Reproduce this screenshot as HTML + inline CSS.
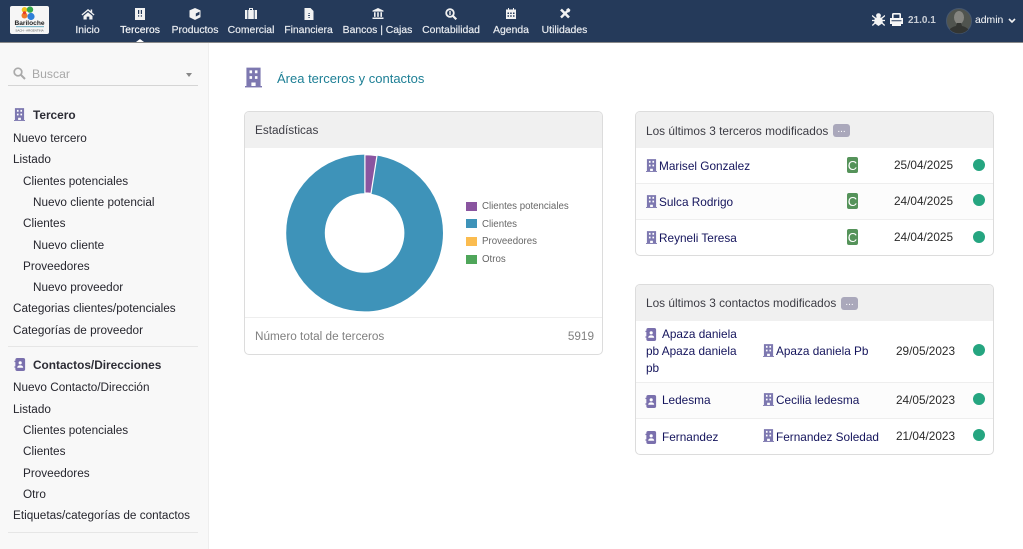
<!DOCTYPE html>
<html lang="es"><head><meta charset="utf-8"><title>Área terceros y contactos</title>
<style>
html,body{margin:0;padding:0;background:#fff;width:1023px;height:549px;overflow:hidden;font-family:"Liberation Sans",Arial,sans-serif;}
.a{position:absolute;white-space:nowrap;line-height:14px;}
#top{position:absolute;left:0;top:0;width:1023px;height:42px;background:#253a5a;border-bottom:1px solid #8a8a8a;box-sizing:content-box;}
.n{position:absolute;top:24px;font-size:10.4px;line-height:14px;color:#e8ebf0;white-space:nowrap;transform:translateX(-50%);-webkit-text-stroke:.2px #e8ebf0;}
.ni{position:absolute;top:8px;transform:translateX(-50%);}
#side{position:absolute;left:0;top:43px;width:208px;height:506px;background:#f8f8f8;border-right:1px solid #eee;}
.s{position:absolute;font-size:11.75px;line-height:14px;color:#26262e;white-space:nowrap;margin-top:1px;}
.sb{font-weight:bold;color:#2c2c35;font-size:11.85px;margin-top:0;}
.hr{position:absolute;height:1px;background:#e6e6e6;left:8px;width:190px;}
.card{position:absolute;border:1px solid #dcdcdc;border-radius:5px;box-sizing:border-box;background:#fff;overflow:hidden;}
.ch{position:absolute;left:0;top:0;right:0;height:36px;background:#f0f0f0;}
.t{position:absolute;font-size:11.8px;line-height:14px;white-space:nowrap;color:#14145c;}
.d{color:#2a2a2a;}
.dot{position:absolute;width:12px;height:12px;border-radius:50%;background:#25a580;}
.c{position:absolute;width:11px;height:16px;background:#55935a;border-radius:2px;color:#fff;font-size:13px;line-height:17px;text-align:center;}
.badge{display:inline-block;position:absolute;width:17px;height:13px;background:#aaa8bb;border-radius:3px;color:#fff;font-size:10px;line-height:12px;text-align:center;}
.row{position:absolute;left:0;right:0;height:1px;background:#eee;}
.lg{position:absolute;font-size:9.7px;line-height:12px;color:#666;white-space:nowrap;}
.sw{position:absolute;width:11px;height:9px;}
svg{display:block;}
</style></head><body>
<svg width="0" height="0" style="position:absolute"><defs>
<symbol id="b" viewBox="0 0 12 14"><path fill="#7d78b0" d="M1 0h10v13H7.5v-2.5h-3V13H1z"/><rect x="0" y="13" width="12" height="1" fill="#7d78b0"/><path fill="#fff" d="M3.2 2h1.8v2H3.2zM7 2h1.8v2H7zM3.2 6h1.8v2H3.2zM7 6h1.8v2H7z"/></symbol>
<symbol id="p" viewBox="0 0 12 14"><rect x="1" y="0" width="10.5" height="14" rx="2" fill="#7a70ad"/><circle cx="6.2" cy="5.2" r="1.7" fill="#fff"/><path fill="#fff" d="M3 10.5c0-2 1.5-2.6 3.2-2.6s3.2.6 3.2 2.6z"/><rect x="0" y="3" width="2" height="1.4" fill="#7a70ad"/><rect x="0" y="9" width="2" height="1.4" fill="#7a70ad"/></symbol>
</defs></svg>

<div id="top">
 <svg style="position:absolute;left:10px;top:6px" width="39" height="28" viewBox="0 0 39 28"><rect width="39" height="28" rx="2" fill="#f6f6f6"/><circle cx="14.5" cy="3.8" r="2.8" fill="#f2c21d"/><circle cx="20" cy="3.6" r="3.2" fill="#35a84a"/><circle cx="14.5" cy="9.5" r="3" fill="#ee7b2c"/><circle cx="21" cy="10.5" r="3.6" fill="#2f7fd8"/><circle cx="14.5" cy="6.8" r="1.6" fill="#e53c2e"/><text x="19.5" y="19" font-family="Liberation Sans" font-size="6.6" font-weight="bold" text-anchor="middle" fill="#222">Bariloche</text><rect x="6" y="20" width="28" height="1.2" fill="#7fb7c9"/><text x="19.5" y="25.5" font-family="Liberation Sans" font-size="3" text-anchor="middle" fill="#555">SACH - ARGENTINA</text></svg>

 <svg class="ni" style="left:87.5px" width="13" height="12" viewBox="0 0 13 12"><path fill="#f2f2f2" d="M6.5 1 0 6.5l.8 1L6.5 2.8l5.7 4.7.8-1-2.3-1.9V1.5H9.2v1.6z"/><path fill="#f2f2f2" d="M2 8 6.5 4.2 11 8v3.5H7.8V8.6H5.2v2.9H2z"/></svg>
 <div class="n" style="left:87.5px">Inicio</div>

 <svg class="ni" style="left:140px" width="10" height="12" viewBox="0 0 10 12"><rect width="10" height="12" fill="#f2f2f2"/><path fill="#253a5a" d="M3 2h1.2v4H3zM5.8 2H7v4H5.8zM3 7.2h1.2v1.4H3zM5.8 7.2H7v1.4H5.8z"/></svg>
 <div class="n" style="left:140px;color:#fff">Terceros</div>
 <div style="position:absolute;left:136px;top:39px;width:0;height:0;border-left:4px solid transparent;border-right:4px solid transparent;border-bottom:3px solid #fff"></div>

 <svg class="ni" style="left:195px" width="11" height="12" viewBox="0 0 11 12"><path fill="#f2f2f2" d="M5.5 0 11 2.4v6.8L5.5 12 0 9.2V2.4z"/><path fill="#253a5a" d="M6.3 5.5 10 3.6v3L6.3 8.5z"/></svg>
 <div class="n" style="left:195px">Productos</div>

 <svg class="ni" style="left:251px" width="12" height="11" viewBox="0 0 12 11"><path fill="#f2f2f2" d="M4 0h4v2h4v9H0V2h4zM5 1v1h2V1z"/><path fill="#253a5a" d="M2.4 2h.8v9h-.8zM8.8 2h.8v9h-.8z"/></svg>
 <div class="n" style="left:251px">Comercial</div>

 <svg class="ni" style="left:308.5px" width="9" height="12" viewBox="0 0 9 12"><path fill="#f2f2f2" d="M0 0h6l3 3v9H0z"/><path fill="#253a5a" d="M4 5h1.2v1H4zM3.6 7h1.8v1H3.6zM4 9h1.2v1H4z"/></svg>
 <div class="n" style="left:308.5px">Financiera</div>

 <svg class="ni" style="left:377.5px" width="11" height="11" viewBox="0 0 11 11"><path fill="#f2f2f2" d="M5.5 0 11 2.6v1H0v-1zM0 9.5h11V11H0z"/><path fill="#f2f2f2" d="M1.5 4.2h1.6v4.7H1.5zM4.7 4.2h1.6v4.7H4.7zM7.9 4.2h1.6v4.7H7.9z"/></svg>
 <div class="n" style="left:377.5px">Bancos | Cajas</div>

 <svg class="ni" style="left:451px" width="12" height="12" viewBox="0 0 12 12"><circle cx="5" cy="5" r="3.8" fill="none" stroke="#f2f2f2" stroke-width="1.8"/><path stroke="#f2f2f2" stroke-width="2.2" d="M8 8l3.3 3.3"/><rect x="4.3" y="3" width="1.4" height="4" fill="#f2f2f2"/></svg>
 <div class="n" style="left:451px">Contabilidad</div>

 <svg class="ni" style="left:511px" width="10" height="11" viewBox="0 0 10 11"><path fill="#f2f2f2" d="M0 1.5h2V0h1v1.5h4V0h1v1.5h2V11H0z"/><path fill="#253a5a" d="M1.5 4.5h1.5V6H1.5zM4.2 4.5h1.5V6H4.2zM7 4.5h1.5V6H7zM1.5 7.3h1.5v1.5H1.5zM4.2 7.3h1.5v1.5H4.2zM7 7.3h1.5v1.5H7z"/></svg>
 <div class="n" style="left:511px">Agenda</div>

 <svg class="ni" style="left:564.5px" width="11" height="11" viewBox="0 0 11 11"><path stroke="#f2f2f2" stroke-width="2.6" d="M1.5 1.5 9.5 9.5"/><path stroke="#f2f2f2" stroke-width="2.4" d="M1.5 9.5 8 3"/><path fill="#f2f2f2" d="M6.8 1.2 9 0l2 2-1.2 2.2-2 .2z"/></svg>
 <div class="n" style="left:564.5px">Utilidades</div>

 <svg style="position:absolute;left:872px;top:13px" width="13" height="13" viewBox="0 0 13 13"><circle cx="6.5" cy="2.6" r="2.4" fill="#f4f4f4"/><path fill="#f4f4f4" d="M2.8 4.5h7.4l.6 5.5L6.5 13 2.2 10z"/><path stroke="#f4f4f4" stroke-width="1.3" d="M0 2.5 3 5M13 2.5 10 5M0 7.5h3M13 7.5h-3M.3 12.5 3 10M12.7 12.5 10 10"/></svg>
 <svg style="position:absolute;left:890px;top:13px" width="13" height="13" viewBox="0 0 13 13"><path fill="#f6f6f6" d="M2 1.5Q2 0 3.5 0h6Q11 0 11 1.5V5h2v6h-2v2H2v-2H0V5h2z"/><path fill="#253a5a" d="M3.6 1.6h5.8V5H3.6zM1.5 7.2h10v1.1h-10z"/></svg>
 <div class="a" style="left:908px;top:14px;font-size:10px;font-weight:bold;color:#c9ced6">21.0.1</div>
 <svg style="position:absolute;left:946px;top:8px" width="26" height="26" viewBox="0 0 26 26"><defs><clipPath id="cl"><circle cx="13" cy="13" r="12.5"/></clipPath></defs><circle cx="13" cy="13" r="12.5" fill="#50544f" stroke="#46576f"/><g clip-path="url(#cl)"><ellipse cx="13" cy="9.5" rx="5" ry="6.5" fill="#858580"/><path fill="#333532" d="M2 26c0-5 4-7 8-8l1-3h4l1 3c4 1 8 3 8 8z"/></g></svg>
 <div class="a" style="left:975px;top:14px;font-size:10.4px;color:#fff">admin</div>
 <svg style="position:absolute;left:1008px;top:18px" width="8" height="6" viewBox="0 0 8 6"><path d="M1 1l3 3 3-3" fill="none" stroke="#f2f2f2" stroke-width="1.6"/></svg>
</div>

<div id="side">
 <svg style="position:absolute;left:13px;top:24px" width="13" height="13" viewBox="0 0 13 13"><circle cx="5" cy="5" r="3.8" fill="none" stroke="#aaa" stroke-width="1.7"/><path stroke="#aaa" stroke-width="2" d="M8 8l4 4"/></svg>
 <div class="s" style="left:32px;top:24px;color:#a8a8a8;font-size:12.2px;margin-top:0">Buscar</div>
 <div style="position:absolute;left:186px;top:30px;width:0;height:0;border-left:3px solid transparent;border-right:3px solid transparent;border-top:4px solid #888"></div>
 <div class="hr" style="top:42px;background:#d5d5d5"></div>

 <svg style="position:absolute;left:14px;top:65px" width="11" height="13"><use href="#b"/></svg>
 <div class="s sb" style="left:33px;top:65px">Tercero</div>
 <div class="s" style="left:13px;top:88px">Nuevo tercero</div>
 <div class="s" style="left:13px;top:109px">Listado</div>
 <div class="s" style="left:23px;top:131px">Clientes potenciales</div>
 <div class="s" style="left:33px;top:152px">Nuevo cliente potencial</div>
 <div class="s" style="left:23px;top:173px">Clientes</div>
 <div class="s" style="left:33px;top:195px">Nuevo cliente</div>
 <div class="s" style="left:23px;top:216px">Proveedores</div>
 <div class="s" style="left:33px;top:237px">Nuevo proveedor</div>
 <div class="s" style="left:13px;top:258px">Categorias clientes/potenciales</div>
 <div class="s" style="left:13px;top:280px">Categorías de proveedor</div>
 <div class="hr" style="top:303px"></div>

 <svg style="position:absolute;left:14px;top:315px" width="12" height="13"><use href="#p"/></svg>
 <div class="s sb" style="left:33px;top:315px">Contactos/Direcciones</div>
 <div class="s" style="left:13px;top:337px">Nuevo Contacto/Dirección</div>
 <div class="s" style="left:13px;top:359px">Listado</div>
 <div class="s" style="left:23px;top:380px">Clientes potenciales</div>
 <div class="s" style="left:23px;top:401px">Clientes</div>
 <div class="s" style="left:23px;top:423px">Proveedores</div>
 <div class="s" style="left:23px;top:444px">Otro</div>
 <div class="s" style="left:13px;top:465px">Etiquetas/categorías de contactos</div>
 <div class="hr" style="top:489px"></div>
</div>

<svg style="position:absolute;left:245px;top:67px" width="17" height="21"><use href="#b"/></svg>
<div class="a" style="left:277px;top:72px;font-size:13px;color:#1d7f95">Área terceros y contactos</div>

<div class="card" style="left:244px;top:111px;width:359px;height:244px">
 <div class="ch"></div>
 <div class="a" style="left:10px;top:12px;font-size:11.75px;color:#3c3c44">Estadísticas</div>
 <svg style="position:absolute;left:0;top:36px" width="357" height="169" viewBox="245 148 357 169">
  <circle cx="364.6" cy="233" r="59.1" fill="none" stroke="#3e93b9" stroke-width="38.6"/>
  <path d="M364.9 154.6 A78.4 78.4 0 0 1 377 155.6 L371 193.5 A40 40 0 0 0 364.9 193z" fill="#8a55a0" stroke="#fff" stroke-width="1.2"/>
 </svg>
 <div class="sw" style="left:221px;top:90px;background:#8a55a0"></div><div class="lg" style="left:237px;top:89px">Clientes potenciales</div>
 <div class="sw" style="left:221px;top:107px;background:#3e93b9"></div><div class="lg" style="left:237px;top:107px">Clientes</div>
 <div class="sw" style="left:221px;top:125px;background:#fbbc4f"></div><div class="lg" style="left:237px;top:124px">Proveedores</div>
 <div class="sw" style="left:221px;top:143px;background:#4fa65a"></div><div class="lg" style="left:237px;top:142px">Otros</div>
 <div class="row" style="top:205px"></div>
 <div class="a" style="left:10px;top:218px;font-size:11.75px;color:#808080">Número total de terceros</div>
 <div class="a" style="right:8px;top:218px;font-size:11.75px;color:#808080">5919</div>
</div>

<div class="card" style="left:635px;top:111px;width:359px;height:145px">
 <div class="ch"></div>
 <div class="a" style="left:10px;top:12px;font-size:11.85px;color:#3c3c44">Los últimos 3 terceros modificados</div>
 <div class="badge" style="left:197px;top:12px">...</div>
 <div style="position:absolute;left:0;right:0;top:72px;height:35px;background:#fcfcfc"></div>
 <svg style="position:absolute;left:10px;top:47px" width="11" height="13"><use href="#b"/></svg><div class="t" style="left:23px;top:47px">Marisel Gonzalez</div>
 <div class="c" style="left:211px;top:45px">C</div><div class="t d" style="left:258px;top:46px">25/04/2025</div><div class="dot" style="left:337px;top:47px"></div>
 <div class="row" style="top:71px;"></div>
 <svg style="position:absolute;left:10px;top:83px" width="11" height="13"><use href="#b"/></svg><div class="t" style="left:23px;top:83px">Sulca Rodrigo</div>
 <div class="c" style="left:211px;top:81px">C</div><div class="t d" style="left:258px;top:82px">24/04/2025</div><div class="dot" style="left:337px;top:82px"></div>
 <div class="row" style="top:107px"></div>
 <svg style="position:absolute;left:10px;top:119px" width="11" height="13"><use href="#b"/></svg><div class="t" style="left:23px;top:119px">Reyneli Teresa</div>
 <div class="c" style="left:211px;top:117px">C</div><div class="t d" style="left:258px;top:118px">24/04/2025</div><div class="dot" style="left:337px;top:119px"></div>
</div>

<div class="card" style="left:635px;top:284px;width:359px;height:171px">
 <div class="ch"></div>
 <div class="a" style="left:10px;top:11px;font-size:11.85px;color:#3c3c44">Los últimos 3 contactos modificados</div>
 <div class="badge" style="left:205px;top:12px">...</div>
 <div style="position:absolute;left:0;right:0;top:98px;height:35px;background:#fcfcfc"></div>
 <svg style="position:absolute;left:9px;top:43px" width="12" height="13"><use href="#p"/></svg>
 <div class="t" style="left:26px;top:42px">Apaza daniela</div>
 <div class="t" style="left:10px;top:59px">pb Apaza daniela</div>
 <div class="t" style="left:10px;top:76px">pb</div>
 <svg style="position:absolute;left:127px;top:59px" width="11" height="13"><use href="#b"/></svg><div class="t" style="left:140px;top:59px">Apaza daniela Pb</div>
 <div class="t d" style="left:260px;top:59px">29/05/2023</div><div class="dot" style="left:337px;top:59px"></div>
 <div class="row" style="top:97px"></div>
 <svg style="position:absolute;left:9px;top:110px" width="12" height="13"><use href="#p"/></svg>
 <div class="t" style="left:26px;top:108px">Ledesma</div>
 <svg style="position:absolute;left:127px;top:108px" width="11" height="13"><use href="#b"/></svg><div class="t" style="left:140px;top:108px">Cecilia ledesma</div>
 <div class="t d" style="left:260px;top:108px">24/05/2023</div><div class="dot" style="left:337px;top:108px"></div>
 <div class="row" style="top:133px"></div>
 <svg style="position:absolute;left:9px;top:146px" width="12" height="13"><use href="#p"/></svg>
 <div class="t" style="left:26px;top:145px">Fernandez</div>
 <svg style="position:absolute;left:127px;top:144px" width="11" height="13"><use href="#b"/></svg><div class="t" style="left:140px;top:145px">Fernandez Soledad</div>
 <div class="t d" style="left:260px;top:144px">21/04/2023</div><div class="dot" style="left:337px;top:144px"></div>
</div>
</body></html>
